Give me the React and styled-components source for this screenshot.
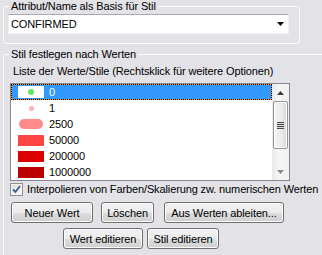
import React from 'react'
import styled, { createGlobalStyle } from 'styled-components'

const Global = createGlobalStyle`
  html, body {
    margin: 0;
    padding: 0;
    background: #e3e3e7;
    overflow: hidden;
  }
  body {
    font-family: "Liberation Sans", Arial, sans-serif;
    font-size: 11px;
    letter-spacing: -0.12px;
    color: #000;
  }
`

const Page = styled.div`
  width: 322px;
  height: 255px;
  padding-left: 3px;
  box-sizing: border-box;
  overflow: hidden;
`

const GroupBox = styled.fieldset`
  box-sizing: border-box;
  width: ${p => p.$width}px;
  min-width: 0;
  margin: ${p => p.$top || 0}px 0 0 0;
  padding: ${p => p.$pad};
  border: 1px solid #fbfbfc;
  border-radius: 3px;
`

const Legend = styled.legend`
  padding: 0 2px;
  margin-left: ${p => p.$offset}px;
  line-height: 12px;
  height: 12px;
`

const Combo = styled.div`
  box-sizing: border-box;
  height: 20px;
  display: flex;
  align-items: center;
  justify-content: space-between;
  padding: 0 4px 0 2px;
  background: #fff;
  border: 1px solid;
  border-color: #a9abb2 #eef0f4 #f2f4f7 #eef0f4;
`

const Caption = styled.div`
  line-height: 12px;
  margin-left: ${p => p.$indent || 0}px;
`

const ListBox = styled.div`
  box-sizing: border-box;
  width: 280px;
  height: 98px;
  margin-top: 6px;
  display: flex;
  background: #fff;
  border: 1px solid #828790;
`

const Rows = styled.div`
  flex: 1;
  overflow: hidden;
`

const Row = styled.div`
  box-sizing: border-box;
  height: 16px;
  display: flex;
  align-items: center;
  gap: 5px;
  padding-left: 7px;
  line-height: 16px;
  color: ${p => (p.$selected ? '#fff' : '#000')};
  background: ${p => (p.$selected ? '#3399ff' : 'transparent')};
  box-shadow: ${p => (p.$selected ? 'inset 0 0 0 1px #f0a040' : 'none')};
  outline: ${p => (p.$selected ? '1px dotted #000' : 'none')};
  outline-offset: -1px;
`

const Swatch = styled.div`
  width: 26px;
  height: 12px;
  display: flex;
  align-items: center;
  justify-content: center;
  background: #fff;
`

const Dot = styled.div`
  width: ${p => p.$size}px;
  height: ${p => p.$size}px;
  border-radius: 50%;
  background: ${p => p.$color};
`

const Bar = styled.div`
  width: ${p => p.$w}px;
  height: ${p => p.$h}px;
  border-radius: ${p => p.$r}px;
  background: ${p => p.$color};
`

const ScrollBar = styled.div`
  width: 17px;
  display: flex;
  flex-direction: column;
  background: linear-gradient(to right, #e9e9e9, #f5f5f5 40%, #f1f1f1);
`

const ArrowCell = styled.div`
  height: 17px;
  display: flex;
  align-items: center;
  justify-content: center;
`

const Thumb = styled.div`
  box-sizing: border-box;
  height: 48px;
  margin: 0 1px;
  display: flex;
  align-items: center;
  justify-content: center;
  border: 1px solid #979797;
  border-radius: 2px;
  background: linear-gradient(to right, #f4f4f4, #ececec 50%, #d9d9d9);
  box-shadow: inset 0 0 0 1px #fbfbfb;
`

const Grip = styled.div`
  width: 7px;
  height: 7px;
  background: repeating-linear-gradient(to bottom, #4d4d4d 0, #4d4d4d 1px, #d8d8d8 1px, #d8d8d8 2px);
`

const Track = styled.div`
  flex: 1;
`

const CheckRow = styled.label`
  display: flex;
  align-items: center;
  gap: 4px;
  height: 13px;
  margin-top: 2px;
  line-height: 13px;
  white-space: nowrap;
`

const CheckBox = styled.span`
  box-sizing: border-box;
  flex: none;
  width: 13px;
  height: 13px;
  display: flex;
  align-items: center;
  justify-content: center;
  border: 1px solid #8e8f8f;
  background: linear-gradient(135deg, #dcdcdc, #fbfbfb);
  box-shadow: inset 0 0 0 1px #f4f4f4;
`

const ButtonRow = styled.div`
  display: flex;
  gap: ${p => p.$gap}px;
  margin-top: ${p => p.$top}px;
  padding-left: ${p => p.$indent}px;
`

const Button = styled.button`
  box-sizing: border-box;
  width: ${p => p.$w}px;
  height: 21px;
  margin-left: ${p => p.$ml || 0}px;
  padding: 0;
  font-family: inherit;
  font-size: 11px;
  letter-spacing: inherit;
  color: #000;
  border: 1px solid #707070;
  border-radius: 3px;
  background: linear-gradient(to bottom, #f2f2f2 0%, #ebebeb 50%, #dddddd 51%, #cfcfcf 100%);
  box-shadow: inset 0 0 0 1px #fbfbfb;
`

const Triangle = ({ up, color }) => (
  <svg width="7" height="4" viewBox="0 0 7 4">
    <path d={up ? 'M3.5 0 L7 4 L0 4 Z' : 'M0 0 L7 0 L3.5 4 Z'} fill={color} />
  </svg>
)

const values = [
  { label: '0', swatch: <Dot $size={6} $color="#5ee85e" /> },
  { label: '1', swatch: <Dot $size={5} $color="#ffb0b0" /> },
  { label: '2500', swatch: <Bar $w={24} $h={10} $r={5} $color="#ff8a8a" /> },
  { label: '50000', swatch: <Bar $w={26} $h={11} $r={0} $color="#ff4444" /> },
  { label: '200000', swatch: <Bar $w={26} $h={11} $r={0} $color="#dd0000" /> },
  { label: '1000000', swatch: <Bar $w={26} $h={11} $r={0} $color="#bb0000" /> },
]

export default function App() {
  return (
    <Page>
      <Global />
      <GroupBox $width={297} $pad="2px 10px 9px 4px">
        <Legend $offset={1}>Attribut/Name als Basis für Stil</Legend>
        <Combo>
          <span>CONFIRMED</span>
          <Triangle color="#000" />
        </Combo>
      </GroupBox>

      <GroupBox $width={340} $top={4} $pad="5px 0 20px 6px">
        <Legend $offset={-1}>Stil festlegen nach Werten</Legend>
        <Caption $indent={3}>Liste der Werte/Stile (Rechtsklick für weitere Optionen)</Caption>
        <ListBox>
          <Rows>
            {values.map((v, i) => (
              <Row key={v.label} $selected={i === 0}>
                <Swatch>{v.swatch}</Swatch>
                <span>{v.label}</span>
              </Row>
            ))}
          </Rows>
          <ScrollBar>
            <ArrowCell><Triangle up color="#3c3c3c" /></ArrowCell>
            <Thumb><Grip /></Thumb>
            <Track />
            <ArrowCell><Triangle color="#8a8a8a" /></ArrowCell>
          </ScrollBar>
        </ListBox>

        <CheckRow>
          <CheckBox>
            <svg width="9" height="9" viewBox="0 0 9 9">
              <path d="M1 4.5 L3.5 7 L8 1" fill="none" stroke="#3f5a8e" strokeWidth="1.8" />
            </svg>
          </CheckBox>
          <span>Interpolieren von Farben/Skalierung zw. numerischen Werten</span>
        </CheckRow>

        <ButtonRow $gap={8} $top={6} $indent={1}>
          <Button $w={82}>Neuer Wert</Button>
          <Button $w={53}>Löschen</Button>
          <Button $w={120} $ml={2}>Aus Werten ableiten...</Button>
        </ButtonRow>
        <ButtonRow $gap={4} $top={5} $indent={53}>
          <Button $w={80}>Wert editieren</Button>
          <Button $w={72}>Stil editieren</Button>
        </ButtonRow>
      </GroupBox>
    </Page>
  )
}
